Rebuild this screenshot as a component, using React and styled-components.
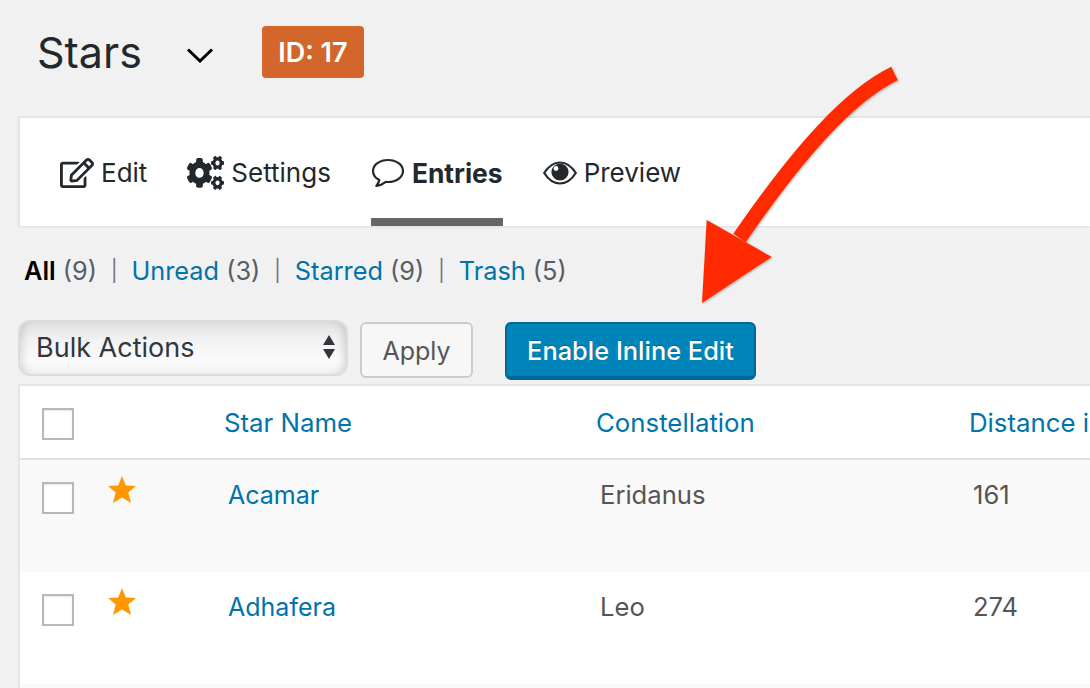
import React from 'react';
import styled, { createGlobalStyle } from 'styled-components';
import { FaRegEdit, FaCogs } from 'react-icons/fa';

const GlobalStyle = createGlobalStyle`
  html, body { margin: 0; padding: 0; background: #f1f1f1; overflow: hidden; }
  body { width: 1090px; height: 688px; font-family: Inter, "Liberation Sans", sans-serif; }
`;

const Page = styled.div`
  position: relative;
  width: 1090px;
  height: 688px;
  overflow: hidden;
  padding-top: 26px;
  box-sizing: border-box;
`;

const Header = styled.div`
  display: flex;
  align-items: center;
  height: 52px;
  padding-left: 37px;
`;

const Title = styled.h1`
  margin: 0;
  font-size: 43px;
  font-weight: 400;
  color: #23282d;
`;

const Chevron = styled.svg`
  width: 28px;
  height: 16px;
  margin-left: 44px;
  margin-top: 6px;
`;

const IdBadge = styled.div`
  margin-left: 48px;
  width: 102px;
  height: 52px;
  display: flex;
  align-items: center;
  justify-content: center;
  background: #d3672b;
  border-radius: 4px;
  color: #fff;
  font-size: 27px;
  font-weight: 600;
`;

const TabCard = styled.div`
  margin: 38px 0 0 18px;
  height: 110px;
  box-sizing: border-box;
  background: #fff;
  border: 2px solid #e5e5e5;
  border-right: 0;
  border-bottom: 0;
  box-shadow: 0 1px 2px rgba(0, 0, 0, 0.08);
  display: flex;
  padding-left: 40px;
  gap: 40px;
`;

const Tab = styled.div`
  display: flex;
  align-items: center;
  gap: 7px;
  height: 108px;
  box-sizing: border-box;
  padding-top: 9px;
  font-size: ${p => (p.$active ? '26.4px' : '26px')};
  font-weight: ${p => (p.$active ? 700 : 400)};
  color: #23282d;
  border-bottom: 8px solid ${p => (p.$active ? '#666' : 'transparent')};
  svg { flex: none; }
`;

const Filters = styled.div`
  display: flex;
  align-items: center;
  height: 32px;
  margin: 28px 0 0 24px;
  font-size: 25.3px;
  color: #555d66;
`;

const FilterItem = styled.span`
  white-space: pre;
  b { font-weight: 600; color: #000; }
  a { color: #0073aa; }
`;

const Sep = styled.span`
  margin: 0 13.8px;
  color: #72777c;
  font-size: 21px;
`;

const Actions = styled.div`
  display: flex;
  align-items: flex-start;
  margin: 34px 0 0 18px;
`;

const BulkSelect = styled.div`
  width: 330px;
  height: 56px;
  box-sizing: border-box;
  border: 2px solid #dcdcdc;
  border-radius: 12px;
  padding: 0 11px 2px 16px;
  display: flex;
  align-items: center;
  justify-content: space-between;
  font-size: 27px;
  color: #32373c;
  background: linear-gradient(#e0e0e0, #f2f2f2 35%, #fbfbfb 75%, #f0f0f0);
  box-shadow: inset 8px 0 8px -6px rgba(0, 0, 0, 0.14), inset -8px 0 8px -6px rgba(0, 0, 0, 0.16);
`;

const Apply = styled.button`
  margin: 2px 0 0 12px;
  width: 113px;
  height: 56px;
  box-sizing: border-box;
  padding: 2px 0 0;
  border: 2px solid #ccc;
  border-radius: 6px;
  background: #f7f7f7;
  font: 400 25px Inter, sans-serif;
  color: #555;
`;

const PrimaryButton = styled.button`
  margin: 2px 0 0 32px;
  width: 251px;
  height: 58px;
  box-sizing: border-box;
  padding: 1px 0 0;
  border: 2px solid #006799;
  border-bottom-width: 4px;
  border-radius: 6px;
  background: #0085ba;
  font: 500 25.4px Inter, sans-serif;
  color: #fff;
  text-shadow: 0 -1px 1px #006799;
`;

const Table = styled.div`
  margin: 4px 0 0 18px;
  border-top: 2px solid #e5e5e5;
  border-left: 2px solid #e5e5e5;
  background: #fff;
`;

const Row = styled.div`
  display: grid;
  grid-template-columns: 204px 372px 373px 1fr;
  box-sizing: border-box;
  height: ${p => (p.$head ? '74px' : '112px')};
  background: ${p => (p.$shade ? '#f9f9f9' : '#fff')};
  border-bottom: ${p => (p.$head ? '2px solid #e1e1e1' : '0')};
  align-items: ${p => (p.$head ? 'center' : 'start')};
  white-space: nowrap;
`;

const CheckCell = styled.div`
  display: flex;
  align-items: flex-start;
  padding-left: 22px;
  padding-top: ${p => (p.$head ? '3px' : '22px')};
`;

const Checkbox = styled.span`
  display: block;
  width: 32px;
  height: 32px;
  box-sizing: border-box;
  border: 2px solid #b4b9be;
  background: #fff;
  box-shadow: inset 0 1px 2px rgba(0, 0, 0, 0.1);
`;

const StarIcon = styled.svg`
  width: 28px;
  height: 28px;
  margin: -6px 0 0 34px;
  flex: none;
`;

const HeadLink = styled.a`
  font-size: 25.8px;
  color: #0073aa;
`;

const Cell = styled.div`
  padding: 19px 0 0 4px;
  line-height: 32px;
  font-size: ${p => (p.$link ? '25px' : '25.6px')};
  color: ${p => (p.$link ? '#0073aa' : '#555')};
`;

const Arrow = styled.svg`
  position: absolute;
  left: 690px;
  top: 60px;
  filter: drop-shadow(1px 1px 1px rgba(0, 0, 0, 0.28));
`;

const entries = [
  { name: 'Acamar', constellation: 'Eridanus', distance: '161' },
  { name: 'Adhafera', constellation: 'Leo', distance: '274' },
];

export default function App() {
  return (
    <Page>
      <GlobalStyle />
      <Header>
        <Title>Stars</Title>
        <Chevron viewBox="0 0 28 16">
          <path d="M2 2.5 L14 14 L26 2.5" fill="none" stroke="#000" strokeWidth="3" />
        </Chevron>
        <IdBadge>ID: 17</IdBadge>
      </Header>
      <TabCard>
        <Tab><FaRegEdit size={34} />Edit</Tab>
        <Tab><FaCogs style={{ width: 37, height: 34 }} preserveAspectRatio="none" />Settings</Tab>
        <Tab $active>
          <svg width="34" height="30" viewBox="0 0 34 30">
            <path
              d="M17 2C8.7 2 2 6.9 2 13c0 3.7 2.5 7 6.3 9-.3 2-1.2 3.9-3 6 3.6-.6 7-2.2 9.5-4.2.7.1 1.5.2 2.2.2 8.3 0 15-4.9 15-11S25.3 2 17 2Z"
              fill="none"
              stroke="#23282d"
              strokeWidth="2.2"
              strokeLinejoin="round"
            />
          </svg>
          Entries
        </Tab>
        <Tab>
          <svg width="34" height="24" viewBox="0 0 34 24">
            <path
              d="M1.2 12C5.5 5.2 10.8 1.5 17 1.5S28.5 5.2 32.8 12C28.5 18.8 23.2 22.5 17 22.5S5.5 18.8 1.2 12Z"
              fill="none"
              stroke="#23282d"
              strokeWidth="2.2"
            />
            <circle cx="17" cy="11" r="8.6" fill="#23282d" />
            <circle cx="13" cy="7.5" r="2.4" fill="#fff" />
          </svg>
          Preview
        </Tab>
      </TabCard>
      <Filters>
        <FilterItem><b>All</b> (9)</FilterItem>
        <Sep>|</Sep>
        <FilterItem><a>Unread</a> (3)</FilterItem>
        <Sep>|</Sep>
        <FilterItem><a>Starred</a> (9)</FilterItem>
        <Sep>|</Sep>
        <FilterItem><a>Trash</a> (5)</FilterItem>
      </Filters>
      <Actions>
        <BulkSelect>
          Bulk Actions
          <svg width="12" height="26" viewBox="0 0 12 26">
            <path d="M6 1 L12 11 L0 11 Z M0 15 L12 15 L6 25 Z" fill="#33363a" />
          </svg>
        </BulkSelect>
        <Apply>Apply</Apply>
        <PrimaryButton>Enable Inline Edit</PrimaryButton>
      </Actions>
      <Table>
        <Row $head>
          <CheckCell $head><Checkbox /></CheckCell>
          <HeadLink>Star Name</HeadLink>
          <HeadLink>Constellation</HeadLink>
          <HeadLink>Distance in Light Years</HeadLink>
        </Row>
        {entries.map((entry, i) => (
          <Row key={entry.name} $shade={i % 2 === 0}>
            <CheckCell>
              <Checkbox />
              <StarIcon viewBox="0 0 28 28">
                <polygon
                  points="14,0 17.8,9.5 28,10 20.3,16.5 23,27 14,21.5 5,27 7.7,16.5 0,10 10.2,9.5"
                  fill="#ff9800"
                />
              </StarIcon>
            </CheckCell>
            <Cell $link>{entry.name}</Cell>
            <Cell>{entry.constellation}</Cell>
            <Cell>{entry.distance}</Cell>
          </Row>
        ))}
        <Row $shade />
      </Table>
      <Arrow width="220" height="260" viewBox="690 60 220 260">
        <path d="M894.5 73.5 C850 95 800 150 739.5 238" fill="none" stroke="#ff2a00" strokeWidth="15" />
        <path d="M706.7 220 L771.7 257 L702 303 Z" fill="#ff2a00" />
      </Arrow>
    </Page>
  );
}
